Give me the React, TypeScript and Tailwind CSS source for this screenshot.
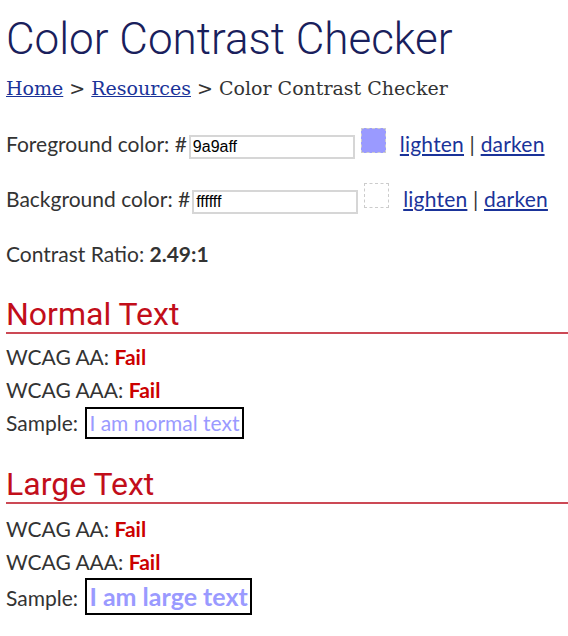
import React from "react";

const body = { fontFamily: 'Lato, "Noto Sans", sans-serif' };

function ColorRow({ label, value, swatch }: { label: string; value: string; swatch: string }) {
  return (
    <div className="flex items-start h-[55px] text-[21px] leading-[33px] text-[#333]">
      <span className="mt-[2px]">{label}</span>
      <input
        readOnly
        value={value}
        className="ml-[2px] mt-[10px] w-[166px] h-[24px] border-2 border-[#d6d6d6] px-[2px] text-[16px] leading-[20px] text-black outline-none"
        style={{ fontFamily: '"Liberation Sans", Arial, sans-serif' }}
      />
      <div
        className="ml-[6px] mt-[3px] w-[25px] h-[25px] border border-dashed border-[#ccc]"
        style={{ backgroundColor: swatch }}
      />
      <span className="ml-[14px] mt-[2px] tracking-[0.2px]">
        <a href="#" className="text-[#1a3399] underline">lighten</a> |{" "}
        <a href="#" className="text-[#1a3399] underline">darken</a>
      </span>
    </div>
  );
}

function Section({ title, mt, large }: { title: string; mt: string; large?: boolean }) {
  return (
    <>
      <h2
        className={`${mt} text-[32px] leading-[36px] text-[#c20e1a] border-b-2 border-[#cc4955]`}
        style={{ fontFamily: "Roboto, sans-serif", fontWeight: 400 }}
      >
        {title}
      </h2>
      <div className={`text-[21px] text-[#333] leading-[33px] ${large ? "mt-[8px]" : "mt-[6px]"}`}>
        <div>
          WCAG AA: <b className="text-[#cc0000]">Fail</b>
        </div>
        <div>
          WCAG AAA: <b className="text-[#cc0000]">Fail</b>
        </div>
        <div>
          Sample:{" "}
          {large ? (
            <span className="inline-block ml-[2px] border-2 border-black px-[2px] leading-[33px] text-[25px] font-bold text-[#9a9aff]">
              I am large text
            </span>
          ) : (
            <span className="inline-block ml-[2px] border-2 border-black px-[2px] leading-[28px] text-[#9a9aff]">
              I am normal text
            </span>
          )}
        </div>
      </div>
    </>
  );
}

export default function App() {
  return (
    <div className="w-[568px] h-[636px] bg-white overflow-hidden pl-[6px]" style={body}>
      <h1
        className="pt-[17px] text-[44px] leading-[44px] text-[#19205c]"
        style={{ fontFamily: "Roboto, sans-serif", fontWeight: 300 }}
      >
        Color Contrast Checker
      </h1>
      <div
        className="mt-[15px] text-[19px] leading-[24px] text-[#333]"
        style={{ fontFamily: '"DejaVu Serif", serif' }}
      >
        <a href="#" className="text-[#1a3399] underline">Home</a> &gt;{" "}
        <a href="#" className="text-[#1a3399] underline">Resources</a> &gt; Color Contrast Checker
      </div>
      <div className="mt-[25px]">
        <ColorRow label="Foreground color: #" value="9a9aff" swatch="#9a9aff" />
        <ColorRow label="Background color: #" value="ffffff" swatch="#ffffff" />
      </div>
      <div className="mt-[2px] text-[21px] leading-[33px] text-[#333]">
        Contrast Ratio: <b>2.49:1</b>
      </div>
      <Section title="Normal Text" mt="mt-[26px]" />
      <Section title="Large Text" mt="mt-[27px]" large />
    </div>
  );
}
